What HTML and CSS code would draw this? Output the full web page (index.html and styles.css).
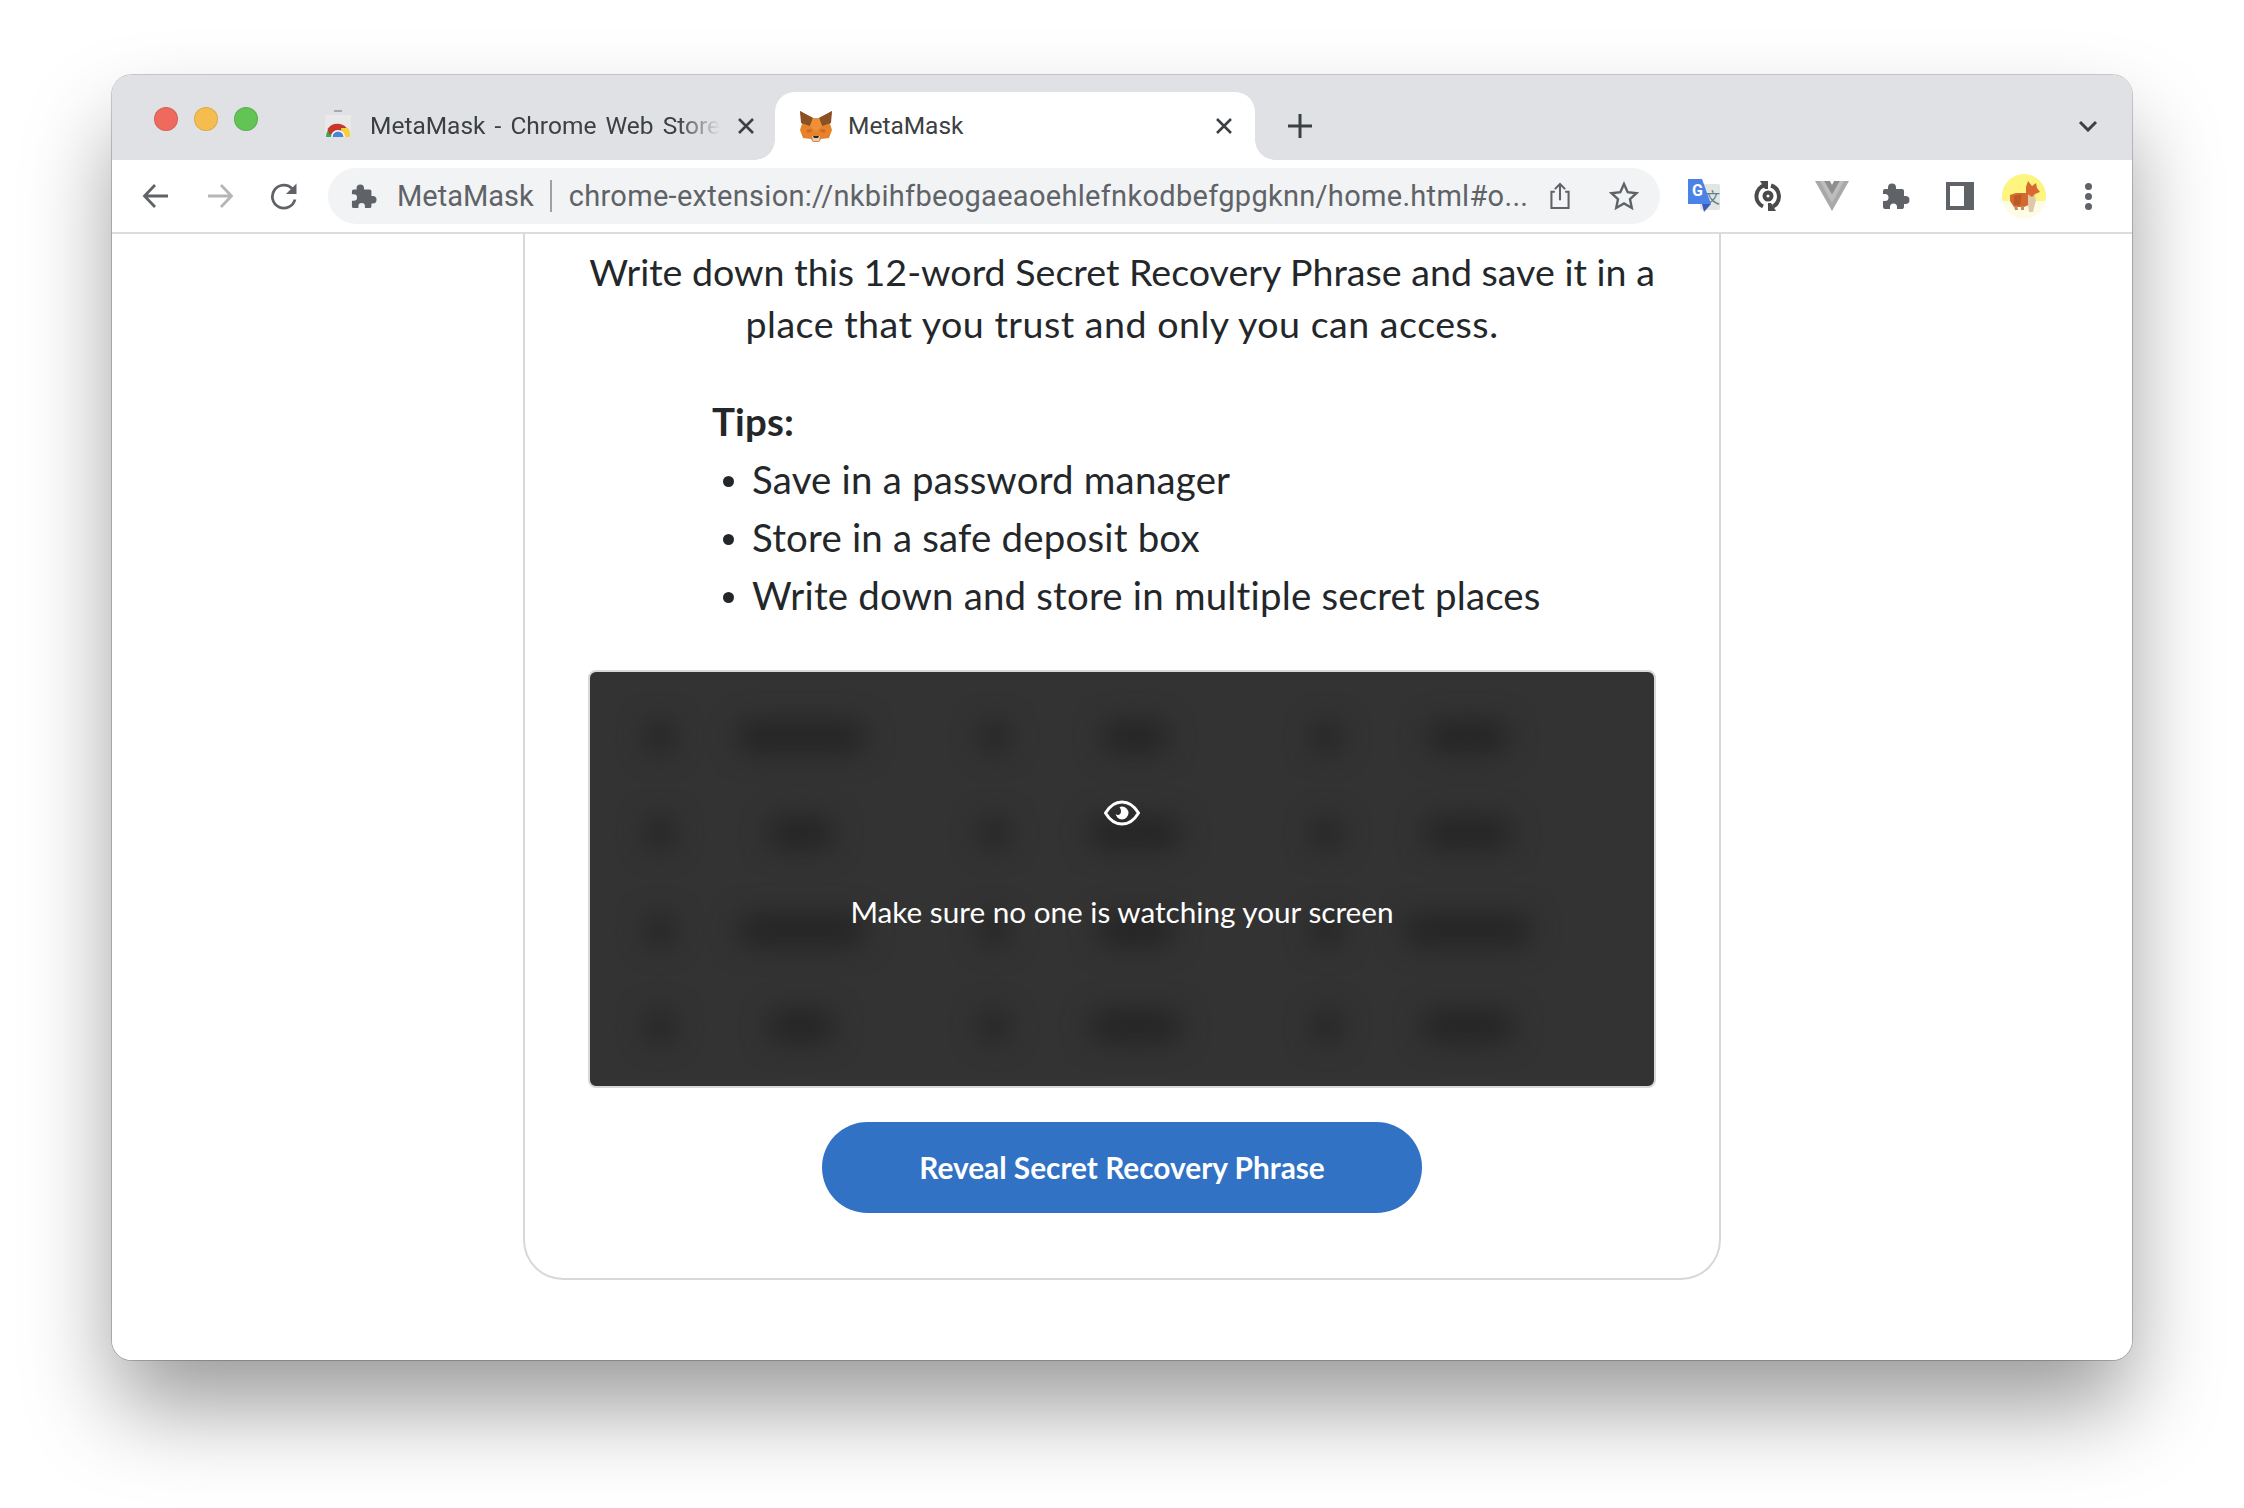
FILE: index.html
```html
<!DOCTYPE html>
<html lang="en">
<head>
<meta charset="utf-8">
<title>MetaMask</title>
<link rel="stylesheet" href="styles.css">
</head>
<body>
<div class="window">
  <header class="tabstrip">
    <div class="lights"><span class="light red"></span><span class="light amber"></span><span class="light green"></span></div>
    <div class="tab">
      <svg class="favicon" viewBox="0 0 32 32" width="32" height="32">
        <rect x="12" y="0" width="8" height="2" fill="#a9a9a9"/>
        <rect x="3" y="5" width="26" height="22" fill="#e9e9ea"/>
        <path d="M4 27a12 12 0 0 1 5-10l4 10z" fill="#3fa757"/>
        <path d="M5.500 19a12 12 0 0 1 21 2l-7 2h-9l-3 2z" fill="#c8352b"/>
        <path d="M19 18h7a12 12 0 0 1 2 9h-8z" fill="#f5cf3f"/>
        <circle cx="16" cy="27" r="7" fill="#fff" clip-path="url(#favclip)"/>
        <path d="M10.500 27a5.500 5.500 0 0 1 11 0z" fill="#4a86d8"/>
        <clipPath id="favclip"><rect x="0" y="0" width="32" height="27"/></clipPath>
      </svg>
      <span class="tab-title fade">MetaMask - Chrome Web Store</span>
      <svg class="close" viewBox="0 0 18 18" width="18" height="18"><path d="M2 2l14 14M16 2L2 16"/></svg>
    </div>
    <div class="tab active">
      <svg class="favicon fox" viewBox="0 0 36 32" width="36" height="32">
        <path d="M2 1l13 7h6l13-7-2 13 2 6-3 8-8 1-2 3h-6l-2-3-8-1-3-8 2-6z" fill="#e8822a"/>
        <path d="M2 1l13 7-3 8-9-3z" fill="#8a5128"/>
        <path d="M34 1L21 8l3 8 9-3z" fill="#8a5128"/>
        <path d="M15 8h6l3 8-6 6-6-6z" fill="#ee8f3a"/>
        <path d="M8 20l5-1 1 2-4 2z" fill="#c96a2c"/>
        <path d="M28 20l-5-1-1 2 4 2z" fill="#c96a2c"/>
        <path d="M14 26h8l-1 5h-6z" fill="#d9cfc3"/>
        <path d="M15 26h6l-1 2h-4z" fill="#2b2620"/>
      </svg>
      <span class="tab-title">MetaMask</span>
      <svg class="close" viewBox="0 0 18 18" width="18" height="18"><path d="M2 2l14 14M16 2L2 16"/></svg>
    </div>
    <svg class="newtab" viewBox="0 0 26 26" width="26" height="26"><path d="M13 1v24M1 13h24"/></svg>
    <svg class="tabmenu" viewBox="0 0 20 12" width="20" height="12"><path d="M2 2l8 8 8-8"/></svg>
  </header>

  <nav class="toolbar">
    <button class="tool" aria-label="Back"><svg viewBox="0 0 28 28" width="28" height="28" class="line"><path d="M26 14H3M13 3L2.500 14 13 25"/></svg></button>
    <button class="tool" aria-label="Forward"><svg viewBox="0 0 28 28" width="28" height="28" class="line faded"><path d="M2 14h23M15 3l10.500 11L15 25"/></svg></button>
    <button class="tool" aria-label="Reload"><svg viewBox="0 0 28 28" width="28" height="28" class="line"><path d="M25 17.500a11.500 11.500 0 1 1-2.500-10.500"/><path class="solid" d="M26.500 1.500v10.500H16z"/></svg></button>
    <div class="omnibox">
      <svg class="puzzle small" viewBox="0 0 28 28" width="26" height="26"><use href="#puzzle"/></svg>
      <span class="site">MetaMask</span>
      <span class="sep"></span>
      <span class="url">chrome-extension://nkbihfbeogaeaoehlefnkodbefgpgknn/home.html#o...</span>
      <button class="tool" aria-label="Share"><svg viewBox="0 0 28 34" width="24" height="30" class="line thin"><path d="M8 12H4v19h20V12h-4M14 22V3M8 9l6-6 6 6"/></svg></button>
      <button class="tool" aria-label="Star"><svg viewBox="0 0 30 30" width="30" height="30" class="line thin"><path d="M15 3l3.700 8.200 8.800 1-6.500 6 1.800 8.800-7.800-4.500L7.200 27 9 18.200l-6.500-6 8.800-1z"/></svg></button>
    </div>
    <div class="extensions">
      <button class="tool" aria-label="Google Translate">
        <svg viewBox="0 0 34 36" width="34" height="36">
          <rect x="13" y="6" width="20" height="26" rx="2" fill="#e3e4e4"/>
          <text x="18" y="25" class="zi">文</text>
          <path d="M1 1h14l9 25H1z" fill="#4a82e8"/>
          <path d="M15 26h9l-7 8z" fill="#3a5bb8"/>
          <text x="5" y="18" class="g">G</text>
        </svg>
      </button>
      <button class="tool" aria-label="Sync">
        <svg viewBox="0 0 32 32" width="32" height="32" class="sync">
          <path d="M13 5A11.500 11.500 0 0 0 11 26.500M19 5.500A11.500 11.500 0 0 1 21 26.500"/>
          <path class="solid" d="M8 1h8v8h-3zM24 31h-8v-8h3z"/>
          <circle cx="16" cy="16" r="3.500"/>
        </svg>
      </button>
      <button class="tool" aria-label="Vue">
        <svg viewBox="0 0 34 30" width="34" height="30">
          <path d="M0 0h9l8 14 8-14h9L17 30z" fill="#a9a9a9"/>
          <path d="M9 0h6l2 4 2-4h6l-8 14z" fill="#8e8e8e"/>
          <path d="M5 0h4l8 14 8-14h4L17 22z" fill="#bdbdbd"/>
        </svg>
      </button>
      <button class="tool" aria-label="Extensions"><svg class="puzzle" viewBox="0 0 28 28" width="28" height="28"><use href="#puzzle"/></svg></button>
      <button class="tool" aria-label="Side panel"><span class="sidepanel"></span></button>
      <button class="tool" aria-label="Profile">
        <svg viewBox="0 0 44 44" width="44" height="44">
          <circle cx="22" cy="22" r="22" fill="#fdf57f"/>
          <path d="M.6 27H43.400A22 22 0 0 1 .6 27z" fill="#fdfce6"/>
          <path d="M8 21l6-2h12l3 11-7 3H12l-4-6z" fill="#d2692e"/>
          <path d="M12 22l8-2-2 11h-6z" fill="#bb5a26"/>
          <path d="M12 32h3l1 4h-3zM19 32h3v4h-3z" fill="#c9885a"/>
          <path d="M26 20l6-1 2 7-3 12h-4l-1-8z" fill="#dfc9a8"/>
          <path d="M24 19v-6l2-6 4 5 4-3 1 5 3 4-5 2-3 3z" fill="#d9692e"/>
        </svg>
      </button>
      <button class="tool" aria-label="Menu"><span class="kebab"><i></i><i></i><i></i></span></button>
    </div>
  </nav>

  <main class="content">
    <section class="card">
      <p class="lead">Write down this 12-word Secret Recovery Phrase and save it in a place that you trust and only you can access.</p>
      <div class="tips">
        <strong>Tips:</strong>
        <ul>
          <li>Save in a password manager</li>
          <li>Store in a safe deposit box</li>
          <li>Write down and store in multiple secret places</li>
        </ul>
      </div>
      <div class="phrase">
        <div class="blurred">
          <div class="pair"><span class="n"></span><span class="w w120"></span></div>
          <div class="pair"><span class="n"></span><span class="w w60"></span></div>
          <div class="pair"><span class="n"></span><span class="w w75"></span></div>
          <div class="pair"><span class="n"></span><span class="w w60"></span></div>
          <div class="pair"><span class="n"></span><span class="w w85"></span></div>
          <div class="pair"><span class="n"></span><span class="w w80"></span></div>
          <div class="pair"><span class="n"></span><span class="w w120"></span></div>
          <div class="pair"><span class="n"></span><span class="w w70"></span></div>
          <div class="pair"><span class="n"></span><span class="w w120"></span></div>
          <div class="pair"><span class="n"></span><span class="w w60"></span></div>
          <div class="pair"><span class="n"></span><span class="w w85"></span></div>
          <div class="pair"><span class="n"></span><span class="w w85"></span></div>
        </div>
        <div class="veil">
          <svg viewBox="0 0 36 26" width="36" height="26" class="eye">
            <path d="M1.500 13C6 5.500 12 2 18 2s12 3.500 16.500 11C30 20.500 24 24 18 24S6 20.500 1.500 13z"/>
            <path class="pupil" d="M18 6.500a6.500 6.500 0 1 1-6.500 6.500c0 1 1 2 2.500 2s3-1.500 3-3.500-.5-3-1.500-4c.7-.6 1.500-1 2.500-1z"/>
          </svg>
          <span class="veil-text">Make sure no one is watching your screen</span>
        </div>
      </div>
      <button class="reveal">Reveal Secret Recovery Phrase</button>
    </section>
  </main>
</div>

<svg class="defs" width="0" height="0" aria-hidden="true">
  <symbol id="puzzle" viewBox="0 0 28 28">
    <path d="M10 1.500a4 4 0 0 1 4 4V7h6a2 2 0 0 1 2 2v5h1.500a4 4 0 0 1 0 8H22v3a2 2 0 0 1-2 2h-5v-2a3.500 3.500 0 0 0-7 0v2H3a2 2 0 0 1-2-2v-6h2a3.500 3.500 0 0 0 0-7H1V9a2 2 0 0 1 2-2h3V5.500a4 4 0 0 1 4-4z"/>
  </symbol>
</svg>
</body>
</html>
```
FILE: styles.css
```css
* { box-sizing: border-box; }
html, body { margin: 0; background: #fff; }
body { padding: 75px 112px 148px; width: 2244px; height: 1508px; overflow: hidden; font-family: "Roboto", sans-serif; }

.window {
  width: 2020px; height: 1285px;
  border-radius: 20px;
  background: #fff;
  display: flex; flex-direction: column;
  box-shadow: 0 0 0 1px rgba(0,0,0,.2), 0 50px 90px -4px rgba(0,0,0,.4);
}

.tabstrip {
  height: 85px; flex: none;
  background: #dfe1e5;
  border-radius: 20px 20px 0 0;
  display: flex; align-items: flex-end;
  position: relative;
}
.lights { display: flex; gap: 16px; padding-left: 42px; width: 193px; align-self: flex-start; margin-top: 32px; }
.light { width: 24px; height: 24px; border-radius: 50%; border: 1px solid rgba(0,0,0,.1); }
.red { background: #ee6a5f; }
.amber { background: #f5bd4f; }
.green { background: #61c454; }

.tab {
  width: 470px; height: 68px;
  display: flex; align-items: center;
  color: #3c4043; font-size: 24.500px;
  padding: 0 20px 1px 17px;
  position: relative;
}
.tab .favicon { flex: none; margin-right: 16px; }
.tab-title { flex: 1; white-space: nowrap; overflow: hidden; word-spacing: 3px; }
.fade { -webkit-mask-image: linear-gradient(90deg, #000 88%, transparent 100%); mask-image: linear-gradient(90deg, #000 88%, transparent 100%); }
.close { flex: none; margin-left: 17px; fill: none; stroke: #3c4043; stroke-width: 2.600; }
.tab.active { width: 480px; background: #fff; border-radius: 20px 20px 0 0; padding-left: 23px; padding-right: 22px; }
.tab.active .favicon { margin-right: 14px; }
.tab.active::before, .tab.active::after {
  content: ""; position: absolute; bottom: 0; width: 20px; height: 20px;
}
.tab.active::before { left: -20px; background: radial-gradient(circle at 0 0, transparent 19.500px, #fff 20px); }
.tab.active::after { right: -20px; background: radial-gradient(circle at 100% 0, transparent 19.500px, #fff 20px); }
.newtab { flex: none; margin: 0 0 21px 32px; fill: none; stroke: #3c4043; stroke-width: 3; }
.tabmenu { flex: none; margin: 0 34px 28px auto; fill: none; stroke: #3c4043; stroke-width: 3; }

.toolbar {
  height: 74px; flex: none;
  background: #fff;
  border-bottom: 2px solid #dadce0;
  display: flex; align-items: center;
  padding: 0 12px;
}
.tool {
  width: 64px; height: 56px; flex: none;
  border: 0; padding: 0; background: none;
  display: flex; align-items: center; justify-content: center;
}
.line { fill: none; stroke: #5f6368; stroke-width: 2.800; }
.line.faded { stroke: #b4b6b8; }
.line.thin { stroke-width: 2.400; }
.solid { fill: #5f6368; stroke: none; }

.omnibox {
  flex: 1; height: 56px; margin: 0 12px 0 12px;
  background: #f1f3f4; border-radius: 28px;
  display: flex; align-items: center;
  padding: 0 4px 0 23px;
  color: #5f6368;
  white-space: nowrap;
}
.puzzle { fill: #5f6368; flex: none; }
.puzzle.small { margin-right: 20px; }
.site { font-size: 29px; }
.sep { width: 2px; height: 32px; background: #9da0a4; margin: 0 17px 0 16px; }
.url { flex: 1; overflow: hidden; font-size: 29px; letter-spacing: .3px; }
.extensions { display: flex; }

.zi { font: 15px "Noto Sans CJK SC", sans-serif; fill: #5d8089; }
.g { font: bold 16px "Roboto", sans-serif; fill: #fff; }
.sync { fill: none; stroke: #4a4a4a; stroke-width: 4; }
.sync .solid { fill: #4a4a4a; }
.sidepanel { width: 28px; height: 28px; border: solid #5f6368; border-width: 4px 10px 4px 4px; }
.kebab { display: flex; flex-direction: column; gap: 3px; }
.kebab i { width: 7px; height: 7px; border-radius: 50%; background: #5f6368; }

.content { flex: 1; min-height: 0; display: flex; justify-content: center; border-radius: 0 0 20px 20px; background: #fff; }
.card {
  width: 1198px; height: 1046px;
  border: 2px solid #d6d9dc; border-top: 0;
  border-radius: 0 0 40px 40px;
  display: flex; flex-direction: column; align-items: center;
  padding-top: 12px;
  color: #24272a;
  font-family: "Lato", sans-serif;
}
.lead { width: 1080px; margin: 0 0 42px; text-align: center; font-size: 37.600px; line-height: 52px; letter-spacing: .5px; }
.lead::first-line { letter-spacing: 0; }
.tips { width: 1068px; padding-left: 124px; font-size: 38.400px; letter-spacing: .2px; }
.tips strong { display: block; line-height: 58px; font-weight: 700; }
.tips ul { margin: 0; padding: 0 0 0 40px; list-style: none; }
.tips li { line-height: 58px; position: relative; }
.tips li::before { content: ""; position: absolute; left: -29px; top: 26px; width: 11px; height: 11px; border-radius: 50%; background: #24272a; }

.phrase {
  width: 1068px; height: 418px; margin-top: 46px; flex: none;
  background: #333; border: 2px solid #d6d9dc; border-radius: 8px;
  position: relative; overflow: hidden;
}
.blurred {
  display: grid;
  grid-template-columns: repeat(3, 333.500px);
  grid-auto-rows: 96.300px;
  padding: 17px 0 0 35px;
  align-items: center;
}
.pair { display: grid; grid-template-columns: 70px 212px; align-items: center; justify-items: center; }
.n, .w { display: block; height: 30px; background: #232323; filter: blur(14px); border-radius: 10px; }
.n { width: 28px; }
.w60 { width: 64px; } .w70 { width: 74px; } .w75 { width: 80px; } .w80 { width: 86px; } .w85 { width: 90px; } .w120 { width: 126px; }

.veil { position: absolute; inset: 0; display: flex; flex-direction: column; align-items: center; color: #fff; padding-top: 128px; }
.eye { fill: none; stroke: #fff; stroke-width: 3; }
.eye .pupil { fill: #fff; stroke: none; }
.veil-text { margin-top: 66px; font-size: 29.700px; line-height: 40px; }

.reveal {
  width: 600px; height: 91px; margin-top: 34px; flex: none;
  border: 0; border-radius: 46px;
  background: #3172c4; color: #fff;
  font: 700 29.800px "Lato", sans-serif;
}
```
